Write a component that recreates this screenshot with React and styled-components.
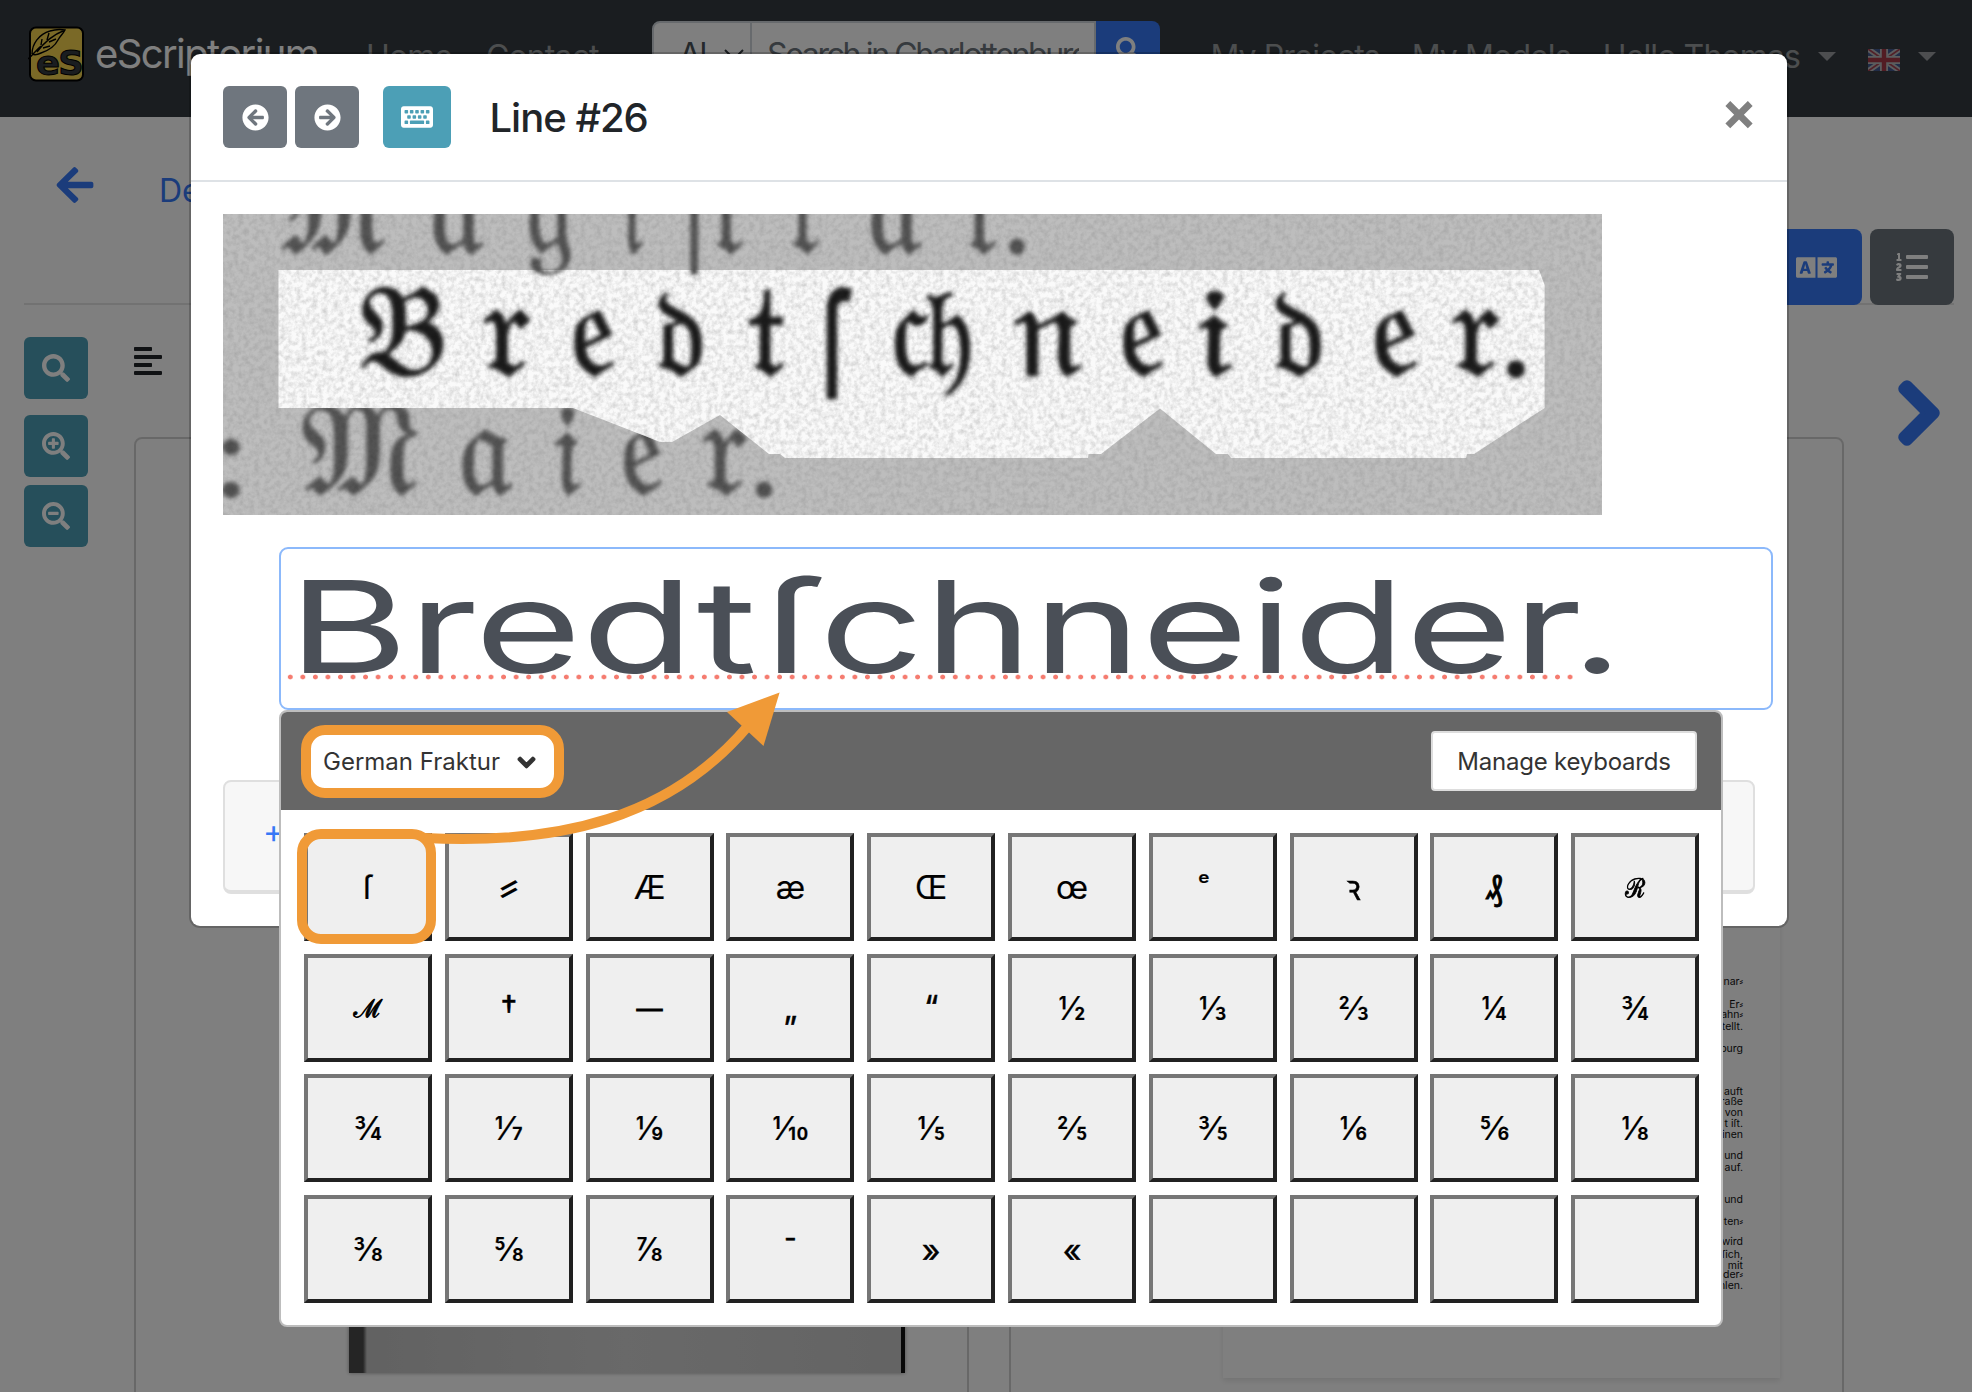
import React from "react";
import styled, { createGlobalStyle } from "styled-components";
import {
  FaArrowLeft,
  FaArrowCircleLeft,
  FaArrowCircleRight,
  FaKeyboard,
  FaSearch,
  FaSearchPlus,
  FaSearchMinus,
  FaAlignLeft,
  FaLanguage,
  FaListOl,
  FaChevronRight,
  FaChevronDown,
} from "react-icons/fa";

const GlobalStyle = createGlobalStyle`
  *, *::before, *::after { box-sizing: border-box; }
  body {
    margin: 0;
    background: #fff;
    color: #212529;
    font-family: Inter, "Liberation Sans", sans-serif;
  }
  button { font-family: inherit; padding: 0; }
`;

const Screen = styled.div`
  position: relative;
  width: 1972px;
  height: 1392px;
  overflow: hidden;
`;

/* ---------- Navigation bar ---------- */

const Navbar = styled.nav`
  display: flex;
  align-items: center;
  height: 117px;
  padding: 0 36px 0 28px;
  background: #343a40;
  color: rgba(255, 255, 255, 0.5);
  font-size: 32px;
  letter-spacing: -0.9px;
  white-space: nowrap;
`;

const NavStart = styled.div`
  display: flex;
  align-items: center;
  width: 624px;
`;

const Brand = styled.div`
  display: flex;
  align-items: center;
  gap: 10px;
  width: 338px;
  padding-bottom: 10px;
  color: #fff;
  font-size: 40px;
  letter-spacing: -1.6px;
`;

const NavItem = styled.span`
  display: flex;
  align-items: center;
  gap: 18px;
  padding-bottom: 4px;
`;

const NavLinks = styled.div`
  display: flex;
  gap: 34px;
`;

const NavEnd = styled(NavLinks)`
  gap: 32px;
  margin-left: auto;
  letter-spacing: -0.88px;
`;

const Caret = styled.i`
  border: 9.5px solid transparent;
  border-top-color: rgba(255, 255, 255, 0.5);
  border-bottom: 0;
`;

const SearchGroup = styled.div`
  display: flex;
  width: 508px;
  height: 76px;
`;

const SearchScope = styled.div`
  display: flex;
  align-items: center;
  justify-content: space-between;
  width: 100px;
  padding: 0 6px 8px 25px;
  border: 2px solid #ced4da;
  border-radius: 8px 0 0 8px;
  background: #fff;
  color: #495057;
  letter-spacing: -1.5px;
`;

const SearchField = styled.div`
  width: 344px;
  padding: 12px 0 0 15px;
  border: 2px solid #ced4da;
  border-left: 0;
  background: #fff;
  color: #6c757d;
`;

const SearchValue = styled.div`
  width: 312px;
  overflow: hidden;
  letter-spacing: -2.35px;
`;

const SearchButton = styled.button`
  flex: 1;
  padding-bottom: 14px;
  border: 0;
  border-radius: 0 8px 8px 0;
  background: #3678f6;
  color: #fff;
  font-size: 24px;
`;

/* ---------- Page behind the dialog ---------- */

const ToolRow = styled.header`
  display: flex;
  justify-content: space-between;
  height: 188px;
  margin: 0 18px 0 24px;
  border-bottom: 2px solid rgba(0, 0, 0, 0.1);
`;

const Tabs = styled.div`
  display: flex;
  align-items: flex-start;
  gap: 63px;
  padding: 47px 0 0 30px;
  color: #3678f6;
  font-size: 42px;
`;

const TabLink = styled.span`
  margin-top: 7px;
  font-size: 32px;
  line-height: 40px;
`;

const PanelToggles = styled.div`
  display: flex;
  align-items: flex-end;
  gap: 8px;
  margin-bottom: -2px;
`;

const Toggle = styled.button`
  display: grid;
  place-items: center;
  width: ${(p) => (p.$active ? 92 : 84)}px;
  height: 76px;
  border: 0;
  border-radius: 8px;
  background: ${(p) => (p.$active ? "#3678f6" : "#6c757d")};
  color: #fff;
  font-size: ${(p) => (p.$active ? 41 : 32)}px;
`;

const Workspace = styled.main`
  display: grid;
  grid-template-columns: 110px 1710px 1fr;
  padding-left: 24px;
`;

const ZoomTools = styled.aside`
  display: flex;
  flex-direction: column;
  gap: 8px;
  padding-top: 32px;
`;

const ZoomButton = styled.button`
  display: grid;
  place-items: center;
  width: 64px;
  height: 62px;
  margin-bottom: ${(p) => (p.$apart ? 8 : 0)}px;
  border: 0;
  border-radius: 6px;
  background: #4c9fb6;
  color: #fff;
  font-size: 28px;
`;

const PanelHeading = styled.div`
  height: 132px;
  margin-left: -2px;
  padding-top: 40px;
  color: #212529;
  font-size: 32px;
  line-height: 0;
`;

const Panels = styled.div`
  display: grid;
  grid-template-columns: 1fr 1fr;
  gap: 40px;
`;

const Panel = styled.section`
  height: 1100px;
  padding: ${(p) => p.$pad};
  border: 2px solid rgba(0, 0, 0, 0.18);
  border-radius: 8px;
`;

const PageScan = styled.div`
  height: 100%;
  border-right: 4px solid #111;
  background: linear-gradient(90deg, #4a4a4a 0 14px, #c4c4c4 18px, #d2d2d2 50%, #c8c8c8);
  box-shadow: 0 0 4px rgba(0, 0, 0, 0.4);
`;

const PageSheet = styled.div`
  height: 100%;
  box-shadow: 0 3px 6px rgba(0, 0, 0, 0.1);
`;

const NextPage = styled.div`
  padding-top: 72px;
  padding-left: 39px;
  color: #3678f6;
  font-size: 72px;
  line-height: 0;
  path {
    stroke: currentColor;
    stroke-width: 30px;
    stroke-linejoin: round;
  }
  svg { overflow: visible; }
`;

/* ---------- Line dialog ---------- */

const Backdrop = styled.div`
  position: absolute;
  inset: 0;
  padding: 54px 185px 0 191px;
  background: rgba(0, 0, 0, 0.5);
`;

const Dialog = styled.div`
  height: 872px;
  border-radius: 9px;
  background: #fff;
  box-shadow: 0 0 0 2px rgba(0, 0, 0, 0.2);
`;

const DialogHeader = styled.header`
  display: flex;
  align-items: center;
  height: 128px;
  padding: 0 32px;
  border-bottom: 2px solid #dee2e6;
`;

const HeaderButton = styled.button`
  display: grid;
  place-items: center;
  width: ${(p) => p.$w || 64}px;
  height: 62px;
  margin-right: ${(p) => p.$gap}px;
  border: 0;
  border-radius: 6px;
  background: ${(p) => p.$bg};
  color: #fff;
  font-size: ${(p) => p.$size || 27}px;
`;

const DialogTitle = styled.h1`
  flex: 1;
  margin: 0;
  font-size: 40px;
  font-weight: 500;
  letter-spacing: -1px;
`;

const CloseButton = styled.button`
  margin: 0 -2px 13px 0;
  border: 0;
  background: none;
  color: #808080;
  font-size: 53px;
  font-weight: 700;
  line-height: 50px;
`;

const DialogBody = styled.div`
  display: flex;
  flex-direction: column;
  padding: 32px;
`;

const ScanSvg = styled.svg`
  display: block;
  width: 1379px;
  height: 301px;
`;

const LineInput = styled.div`
  position: relative;
  width: 1494px;
  height: 163px;
  margin: 32px 0 0 56px;
  padding-left: 7px;
  border: 2.5px solid #8cb9fb;
  border-radius: 9px;
  background: #fff;
`;

const LineText = styled.span`
  display: inline-block;
  color: #4a4f57;
  font-size: 128px;
  line-height: 155px;
  white-space: nowrap;
  transform: scaleX(1.436);
  transform-origin: 0 0;
`;

const LongS = styled.span`
  margin: 0 -2px 0 5px;
`;

const SpellDots = styled.i`
  position: absolute;
  left: 3px;
  top: 125px;
  width: 1293px;
  height: 6px;
  background: radial-gradient(circle at 50% 50%, #f57c70 2px, rgba(245, 124, 112, 0) 2.8px) 0 0 / 12.55px 6px;
`;

const VersionsCard = styled.div`
  height: 114px;
  margin-top: 70px;
  padding: 27px 38px;
  border: 2px solid #dfdfdf;
  border-bottom-width: 4px;
  border-radius: 8px;
  background: #f7f7f7;
  color: #3678f6;
  font-size: 32px;
  line-height: 46px;
`;

/* ---------- Virtual keyboard ---------- */

const KeyboardPanel = styled.div`
  position: absolute;
  left: 279px;
  top: 710px;
  width: 1444px;
  height: 617px;
  overflow: hidden;
  border: 2px solid #bdbdbd;
  border-radius: 8px;
  background: #fff;
`;

const KeyboardHeader = styled.div`
  display: flex;
  align-items: center;
  justify-content: space-between;
  height: 98px;
  padding: 0 24px 0 20px;
  background: #666;
  color: #333;
  font-size: 24px;
`;

const LayoutSelect = styled.div`
  display: flex;
  align-items: center;
  justify-content: space-between;
  width: 263px;
  height: 73px;
  padding: 2px 18px 0 12px;
  border: 10px solid #f09a37;
  border-radius: 24px;
  background: #fff;
  line-height: 1;
  svg {
    overflow: visible;
    font-size: 19px;
  }
  path {
    stroke: currentColor;
    stroke-width: 50px;
    stroke-linejoin: round;
  }
`;

const ManageButton = styled.button`
  width: 266px;
  height: 60px;
  padding-top: 1px;
  border: 2px solid #ddd;
  border-radius: 4px;
  background: #fff;
  color: #333;
  font-size: 24px;
  letter-spacing: -0.22px;
`;

const KeyGrid = styled.div`
  display: grid;
  grid-template-columns: repeat(10, 128px);
  grid-auto-rows: 108px;
  gap: 12.65px 12.8px;
  padding: 23px 23px;
`;

const Key = styled.button`
  display: grid;
  place-items: center;
  border: 4px solid;
  border-color: #767676 #212121 #212121 #767676;
  background: #efefef;
  color: #000;
`;

const KeyLabel = styled.span`
  font-family: ${(p) => (p.$font ? `"${p.$font}", ` : "")}Inter, "Noto Sans", sans-serif;
  font-size: ${(p) => p.$size || 32}px;
  line-height: 39px;
  transform: translate(${(p) => p.$dx || 0}px, ${(p) => p.$dy || 0}px) scaleX(${(p) => p.$sx || 1});
  -webkit-text-stroke: ${(p) => p.$bold || 0.2}px #000;
`;

const KeyHighlight = styled.div`
  position: absolute;
  left: 297px;
  top: 829px;
  width: 139px;
  height: 115px;
  border: 10px solid #f09a37;
  border-radius: 24px;
`;

const ArrowLayer = styled.svg`
  position: absolute;
  left: 420px;
  top: 680px;
  width: 380px;
  height: 180px;
`;

/* ---------- Data ---------- */

const KEYS = [
  { c: "ſ" }, { c: "⸗", size: 42, sx: 1.3, dy: -3, font: "Noto Sans" }, { c: "Æ" }, { c: "æ" }, { c: "Œ" }, { c: "œ" },
  { c: "ᵉ", size: 28, dx: -9, dy: -2 }, { c: "ꝛ", size: 35, sx: 0.88, bold: 0.5 }, { c: "₰", bold: 0.8 },
  { c: "ℛ", size: 26, sx: 0.88, bold: 0.9 },
  { c: "ℳ", size: 25, sx: 1, bold: 0.9, dy: 1 }, { c: "†", size: 33, bold: 0.5 }, { c: "—", size: 26, bold: 0.9, dy: 1 },
  { c: "„", bold: 0.5 }, { c: "“", bold: 0.5 },
  { c: "½", dy: 1 }, { c: "⅓", dy: 1 }, { c: "⅔", dy: 1 }, { c: "¼", dy: 1 }, { c: "¾", dy: 1 },
  { c: "¾" }, { c: "⅐" }, { c: "⅑" }, { c: "⅒" }, { c: "⅕" }, { c: "⅖" }, { c: "⅗" }, { c: "⅙" }, { c: "⅚" }, { c: "⅛" },
  { c: "⅜", dy: 1 }, { c: "⅝", dy: 1 }, { c: "⅞", dy: 1 }, { c: "¯", bold: 0.5, dy: 2 },
  { c: "»", bold: 0.5, dy: 2 }, { c: "«", bold: 0.5, dy: 2 },
  { c: "" }, { c: "" }, { c: "" }, { c: "" },
];

/* [glyph, left, width, baseline, font size, plain sans flag] in scan coordinates */
const UPPER = [
  ["𝔐", 55, 108, 39, 134], ["𝔞", 206, 54, 39, 136], ["𝔤", 303, 48, 39, 136], ["𝔦", 398, 22, 39, 136],
  ["ſ", 462, 24, 60, 150, 1], ["𝔱", 488, 34, 39, 136], ["𝔯", 566, 34, 39, 136], ["𝔞", 644, 54, 39, 136],
  ["𝔱", 741, 34, 39, 136], [".", 779, 30, 39, 110, 1],
];
const MIDDLE = [
  ["𝔅", 136, 88, 161, 128], ["𝔯", 260, 48, 161, 134], ["𝔢", 347, 46, 161, 134], ["𝔡", 432, 50, 161, 124],
  ["𝔱", 525, 38, 161, 126], ["ſ", 597, 31, 184, 144, 1], ["𝔠", 668, 38, 161, 134], ["𝔥", 702, 48, 161, 124],
  ["𝔫", 790, 68, 161, 134], ["𝔢", 896, 46, 161, 134], ["𝔦", 973, 36, 161, 124], ["𝔡", 1049, 52, 161, 124],
  ["𝔢", 1148, 48, 161, 134], ["𝔯", 1229, 48, 161, 134], [".", 1276, 34, 162, 118, 1],
];
const LOWER = [
  [":", -9, 34, 282, 108, 1], ["𝔐", 78, 118, 280, 130], ["𝔞", 235, 54, 280, 134], ["𝔦", 330, 28, 280, 128],
  ["𝔢", 397, 44, 280, 134], ["𝔯", 479, 46, 280, 134], [".", 525, 32, 282, 110, 1],
];

const TRANSCRIPTION = [
  ["nar⸗", 985], ["Er⸗", 1008], ["ahn⸗", 1018], ["tellt.", 1030], ["burg", 1052], ["auft", 1095], ["raße", 1105],
  ["von", 1116], ["t iſt.", 1127], ["inen", 1138], ["und", 1159], ["auf.", 1171], ["und", 1203], ["ten⸗", 1225],
  ["wird", 1245], ["ſich,", 1258], ["mit", 1269], ["der⸗", 1278], ["hlen.", 1289],
];

const Letters = ({ items, fill, weight }) => (
  <g
    fill={fill}
    stroke={fill}
    strokeWidth={weight}
    filter="url(#inkBlur)"
    fontFamily='"DejaVu Sans", "DejaVu Serif", serif'
  >
    {items.map(([c, x, w, y, size, plain], i) => (
      <text
        key={i}
        x={x}
        y={y}
        fontSize={size}
        textLength={w}
        lengthAdjust="spacingAndGlyphs"
        fontFamily={plain ? "Inter, sans-serif" : undefined}
      >
        {c}
      </text>
    ))}
  </g>
);

const MASK =
  "M55.5 56H1316L1321.6 71V194L1251 240H1244L1243 244H1008L1005 240H993L937 194.5L878 240H865.5L865 244H562L557 240H546L497 201L449 228H437L422 222L350 194H55.5Z";

function LineScan() {
  return (
    <ScanSvg viewBox="0 0 1379 301">
      <defs>
        <filter id="inkBlur" x="-5%" y="-20%" width="110%" height="140%">
          <feGaussianBlur stdDeviation="2" />
        </filter>
        <filter id="paperGrain" x="0" y="0" width="100%" height="100%">
          <feTurbulence type="fractalNoise" baseFrequency="0.19" numOctaves="3" seed="4" />
          <feColorMatrix values="0 0 0 0 0  0 0 0 0 0  0 0 0 0 0  0.7 0 0 0 -0.25" />
        </filter>
        <clipPath id="lineMask">
          <path d={MASK} />
        </clipPath>
      </defs>
      <rect width="1379" height="301" fill="#bdbdbd" />
      <Letters items={UPPER} fill="#525252" weight="2" />
      <Letters items={LOWER} fill="#525252" weight="2" />
      <rect width="1379" height="301" filter="url(#paperGrain)" opacity="0.27" />
      <g clipPath="url(#lineMask)">
        <rect width="1379" height="301" fill="#fafafa" />
        <Letters items={UPPER.filter(([c]) => c === "𝔤" || c === "ſ")} fill="#4a4a4a" weight="1" />
        <Letters items={MIDDLE} fill="#1c1c1c" weight="2.4" />
        <rect width="1379" height="301" filter="url(#paperGrain)" opacity="0.42" />
      </g>
    </ScanSvg>
  );
}

function Logo() {
  return (
    <svg width="57" height="56" viewBox="0 0 57 56">
      <rect x="2" y="1.5" width="53" height="53" rx="6" fill="#f5d34f" stroke="#000" strokeWidth="2" />
      <path
        d="M0 33C5 29 8 24 13 20M4 28C4 18 11 8 22 5C28 3 32 3 37 4C35 8 32 10 30 14C27 20 22 24 13 27C9 29 6 29 4 28M37 4C27 8 17 15 9 26M13 19L14 13M19 14L21 7M15 22L22 20M21 16L28 13"
        fill="none"
        stroke="#000"
        strokeWidth="1.4"
      />
      <text x="8" y="49" fill="#343a40" stroke="#000" strokeWidth="1" fontFamily="DejaVu Sans" fontWeight="700" fontSize="33" textLength="46" lengthAdjust="spacingAndGlyphs">
        eS
      </text>
    </svg>
  );
}

const FlagSvg = styled.svg`
  width: 32px;
  height: 22px;
  margin-top: 7px;
  opacity: 0.65;
`;

function Flag() {
  return (
    <FlagSvg viewBox="0 0 32 22">
      <rect width="32" height="22" fill="#4a68b8" />
      <path d="M0 0L32 22M32 0L0 22" stroke="#fff" strokeWidth="5.5" />
      <path d="M0 0L32 22M32 0L0 22" stroke="#e0455a" strokeWidth="1.8" />
      <path d="M16 0V22M0 11H32" stroke="#fff" strokeWidth="8" />
      <path d="M16 0V22M0 11H32" stroke="#e0384c" strokeWidth="4.4" />
    </FlagSvg>
  );
}

export default function App() {
  return (
    <Screen>
      <GlobalStyle />
      <Navbar>
        <NavStart>
          <Brand>
            <Logo />
            eScriptorium
          </Brand>
          <NavLinks>
            <NavItem>Home</NavItem>
            <NavItem>Contact</NavItem>
          </NavLinks>
        </NavStart>
        <SearchGroup>
          <SearchScope>
            Al
            <svg width="20" height="12" viewBox="0 0 20 12">
              <path d="M1 1L10 10L19 1" fill="none" stroke="#343a40" strokeWidth="2" />
            </svg>
          </SearchScope>
          <SearchField>
            <SearchValue>Search in Charlottenburg</SearchValue>
          </SearchField>
          <SearchButton>
            <FaSearch />
          </SearchButton>
        </SearchGroup>
        <NavEnd>
          <NavItem>My Projects</NavItem>
          <NavItem>My Models</NavItem>
          <NavItem>
            Hello Thomas <Caret />
          </NavItem>
          <NavItem>
            <Flag /> <Caret />
          </NavItem>
        </NavEnd>
      </Navbar>

      <ToolRow>
        <Tabs>
          <FaArrowLeft />
          <TabLink>Description</TabLink>
        </Tabs>
        <PanelToggles>
          <Toggle $active>
            <FaLanguage />
          </Toggle>
          <Toggle>
            <FaListOl />
          </Toggle>
        </PanelToggles>
      </ToolRow>

      <Workspace>
        <ZoomTools>
          <ZoomButton $apart>
            <FaSearch />
          </ZoomButton>
          <ZoomButton>
            <FaSearchPlus />
          </ZoomButton>
          <ZoomButton>
            <FaSearchMinus />
          </ZoomButton>
        </ZoomTools>
        <div>
          <PanelHeading>
            <FaAlignLeft />
          </PanelHeading>
          <Panels>
            <Panel $pad="60px 62px 162px 213px">
              <PageScan />
            </Panel>
            <Panel $pad="60px 62px 157px 212px">
              <PageSheet>
                <svg width="557" height="880" viewBox="1223 499 557 880">
                  <g fill="#111" fontSize="10.5" textAnchor="end">
                    {TRANSCRIPTION.map(([text, y]) => (
                      <text key={y} x="1743" y={y}>
                        {text}
                      </text>
                    ))}
                  </g>
                </svg>
              </PageSheet>
            </Panel>
          </Panels>
        </div>
        <NextPage>
          <FaChevronRight />
        </NextPage>
      </Workspace>

      <Backdrop>
        <Dialog>
          <DialogHeader>
            <HeaderButton $bg="#6f767e" $gap={8}>
              <FaArrowCircleLeft />
            </HeaderButton>
            <HeaderButton $bg="#6f767e" $gap={24}>
              <FaArrowCircleRight />
            </HeaderButton>
            <HeaderButton $bg="#4c9fb6" $gap={38.5} $w={68} $size={32}>
              <FaKeyboard />
            </HeaderButton>
            <DialogTitle>Line #26</DialogTitle>
            <CloseButton>×</CloseButton>
          </DialogHeader>
          <DialogBody>
            <LineScan />
            <LineInput>
              <LineText>
                Bredt<LongS>ſ</LongS>chneider.
              </LineText>
              <SpellDots />
            </LineInput>
            <VersionsCard>+</VersionsCard>
          </DialogBody>
        </Dialog>
      </Backdrop>

      <KeyboardPanel>
        <KeyboardHeader>
          <LayoutSelect>
            German Fraktur
            <FaChevronDown />
          </LayoutSelect>
          <ManageButton>Manage keyboards</ManageButton>
        </KeyboardHeader>
        <KeyGrid>
          {KEYS.map((k, i) => (
            <Key key={i}>
              <KeyLabel $size={k.size} $dx={k.dx} $dy={k.dy} $sx={k.sx} $bold={k.bold} $font={k.font}>
                {k.c}
              </KeyLabel>
            </Key>
          ))}
        </KeyGrid>
      </KeyboardPanel>

      <KeyHighlight />
      <ArrowLayer viewBox="420 680 380 180">
        <path d="M424 838C560 845 670 818 748 726" fill="none" stroke="#f09a37" strokeWidth="10" />
        <path d="M779.6 692.6L727 712L763.5 746Z" fill="#f09a37" />
      </ArrowLayer>
    </Screen>
  );
}
